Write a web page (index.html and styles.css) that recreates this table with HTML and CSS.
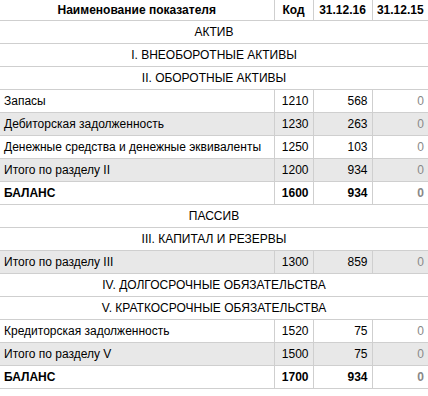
FILE: index.html
```html
<!DOCTYPE html>
<html lang="ru">
<head>
<meta charset="utf-8">
<link rel="stylesheet" href="styles.css">
</head>
<body>
<table class="report">
  <colgroup>
    <col class="c-name"><col class="c-code"><col class="c-val"><col class="c-val2">
  </colgroup>
  <thead>
    <tr><th>Наименование показателя</th><th>Код</th><th>31.12.16</th><th>31.12.15</th></tr>
  </thead>
  <tbody>
    <tr class="sec"><td colspan="4">АКТИВ</td></tr>
    <tr class="sec"><td colspan="4">I. ВНЕОБОРОТНЫЕ АКТИВЫ</td></tr>
    <tr class="sec"><td colspan="4">II. ОБОРОТНЫЕ АКТИВЫ</td></tr>
    <tr><td>Запасы</td><td class="num">1210</td><td class="num">568</td><td class="num prev">0</td></tr>
    <tr class="alt"><td>Дебиторская задолженность</td><td class="num">1230</td><td class="num">263</td><td class="num prev">0</td></tr>
    <tr><td>Денежные средства и денежные эквиваленты</td><td class="num">1250</td><td class="num">103</td><td class="num prev">0</td></tr>
    <tr class="alt"><td>Итого по разделу II</td><td class="num">1200</td><td class="num">934</td><td class="num prev">0</td></tr>
    <tr class="total"><td>БАЛАНС</td><td class="num">1600</td><td class="num">934</td><td class="num prev">0</td></tr>
    <tr class="sec"><td colspan="4">ПАССИВ</td></tr>
    <tr class="sec"><td colspan="4">III. КАПИТАЛ И РЕЗЕРВЫ</td></tr>
    <tr class="alt"><td>Итого по разделу III</td><td class="num">1300</td><td class="num">859</td><td class="num prev">0</td></tr>
    <tr class="sec"><td colspan="4">IV. ДОЛГОСРОЧНЫЕ ОБЯЗАТЕЛЬСТВА</td></tr>
    <tr class="sec"><td colspan="4">V. КРАТКОСРОЧНЫЕ ОБЯЗАТЕЛЬСТВА</td></tr>
    <tr><td>Кредиторская задолженность</td><td class="num">1520</td><td class="num">75</td><td class="num prev">0</td></tr>
    <tr class="alt"><td>Итого по разделу V</td><td class="num">1500</td><td class="num">75</td><td class="num prev">0</td></tr>
    <tr class="total"><td>БАЛАНС</td><td class="num">1700</td><td class="num">934</td><td class="num prev">0</td></tr>
  </tbody>
</table>
</body>
</html>
```
FILE: styles.css
```css
html, body {
  margin: 0;
  padding: 0;
  background: #fff;
}
body {
  font-family: "Liberation Sans", Arial, sans-serif;
  font-size: 12px;
  color: #000;
}
.report {
  width: 428px;
  border-collapse: collapse;
  table-layout: fixed;
}
.c-name { width: 274px; }
.c-code { width: 39px; }
.c-val { width: 59px; }
.c-val2 { width: 56px; }
.report th {
  font-weight: bold;
  height: 20px;
  padding: 0 4px;
  text-align: center;
  border-bottom: 1px solid #cfcfcf;
  border-left: 1px solid #cfcfcf;
  white-space: nowrap;
}
.report th:first-child { border-left: none; }
.report td {
  height: 22px;
  padding: 0 4px;
  border-bottom: 1px solid #cfcfcf;
  border-left: 1px solid #cfcfcf;
  white-space: nowrap;
}
.report td:first-child { border-left: none; }
.sec td { text-align: center; }
.num { text-align: right; }
.prev { color: #888; }
.alt td { background: #e8e8e8; }
.total td { font-weight: bold; }
```
